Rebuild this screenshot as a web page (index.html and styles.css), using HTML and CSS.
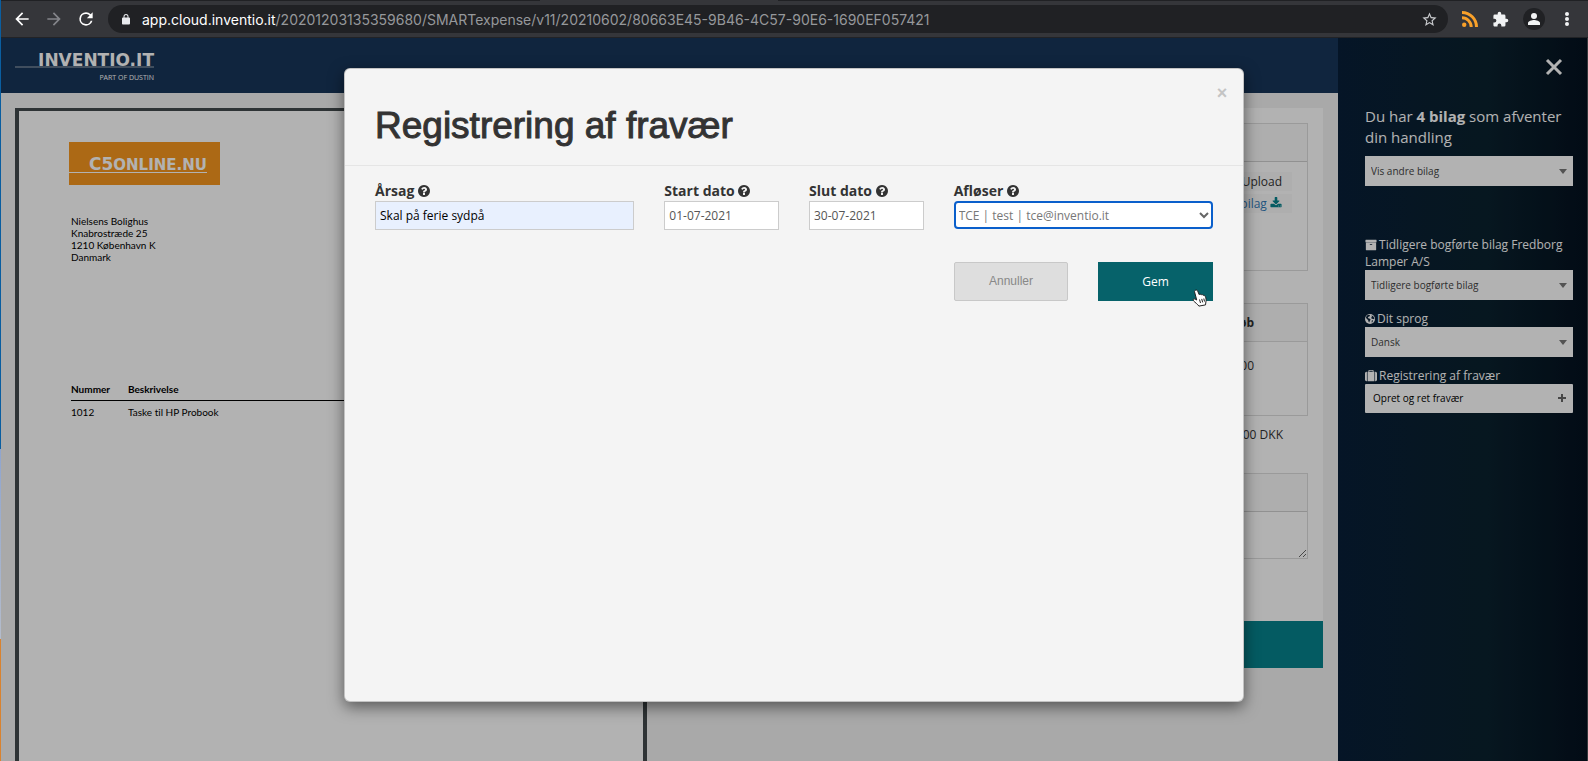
FILE: index.html
```html
<!DOCTYPE html>
<html lang="da">
<head>
  <meta charset="UTF-8">
  <meta name="viewport" content="width=device-width, initial-scale=1.0">
  <title>SMARTexpense</title>
  <link rel="stylesheet" href="styles.css">
</head>
<body>
  <svg class="sprite" aria-hidden="true">
    <symbol id="question" viewBox="0 0 1792 1792"><path d="M1024 1376v-192q0-14-9-23t-23-9h-192q-14 0-23 9t-9 23v192q0 14 9 23t23 9h192q14 0 23-9t9-23zm256-672q0-88-55.500-163t-138.500-116-170-41q-243 0-371 213-15 24 8 42l132 100q7 6 19 6 16 0 25-12 53-68 86-92 34-24 86-24 48 0 85.500 26t37.500 59q0 38-20 61t-68 45q-63 28-115.500 86.500t-52.500 125.500v36q0 14 9 23t23 9h192q14 0 23-9t9-23q0-19 21.500-49.500t54.500-49.500q32-18 49-28.500t46-35 44.500-48 28-60.500 12.500-81zm384 192q0 209-103 385.500t-279.500 279.500-385.500 103-385.500-103-279.500-279.500-103-385.500 103-385.500 279.500-279.500 385.500-103 385.500 103 279.500 279.500 103 385.500z"/></symbol>
    <symbol id="caret" viewBox="0 0 8 5"><path d="M0 0h8L4 5z"/></symbol>
  </svg>

  <div class="browser-bar">
    <div class="tab-strip"><span class="tab-active"></span></div>
    <div class="toolbar">
      <button class="nav-btn" aria-label="Tilbage"><svg viewBox="0 0 24 24"><path d="M20 11H7.800l5.600-5.600L12 4l-8 8 8 8 1.400-1.400L7.800 13H20z"/></svg></button>
      <button class="nav-btn disabled" aria-label="Frem"><svg viewBox="0 0 24 24"><path d="M12 4l-1.400 1.400L16.200 11H4v2h12.200l-5.600 5.600L12 20l8-8z"/></svg></button>
      <button class="nav-btn" aria-label="Genindlæs"><svg viewBox="0 0 24 24"><path d="M17.650 6.350A7.960 7.960 0 0 0 12 4a8 8 0 1 0 7.730 10h-2.080A6 6 0 1 1 12 6c1.660 0 3.140.69 4.220 1.780L13 11h7V4z"/></svg></button>
      <div class="address">
        <svg class="lock" viewBox="0 0 24 24"><path d="M18 8h-1V6A5 5 0 0 0 7 6v2H6a2 2 0 0 0-2 2v10c0 1.100.9 2 2 2h12a2 2 0 0 0 2-2V10a2 2 0 0 0-2-2zM9 6a3 3 0 0 1 6 0v2H9z"/></svg>
        <span class="url"><b>app.cloud.inventio.it</b>/20201203135359680/SMARTexpense/v11/20210602/80663E45-9B46-4C57-90E6-1690EF057421</span>
        <svg class="star" viewBox="0 0 24 24"><path d="M22 9.240l-7.190-.62L12 2 9.190 8.630 2 9.240l5.460 4.730L5.820 21 12 17.270 18.180 21l-1.630-7.030zM12 15.400l-3.760 2.270 1-4.280-3.320-2.880 4.380-.38L12 6.100l1.710 4.040 4.380.38-3.320 2.880 1 4.280z"/></svg>
      </div>
      <div class="extensions">
        <svg class="rss" viewBox="0 0 16 16"><circle cx="2.200" cy="13.800" r="2.200"/><path d="M0 5.300v3A7.700 7.700 0 0 1 7.700 16h3A10.700 10.700 0 0 0 0 5.300zM0 0v3a13 13 0 0 1 13 13h3A16 16 0 0 0 0 0z"/></svg>
        <svg class="puzzle" viewBox="0 0 24 24"><path d="M20.500 11H19V7a2 2 0 0 0-2-2h-4V3.500a2.500 2.500 0 0 0-5 0V5H4a2 2 0 0 0-2 2v3.800h1.500a2.700 2.700 0 0 1 0 5.400H2V20c0 1.100.9 2 2 2h3.800v-1.500a2.700 2.700 0 0 1 5.400 0V22H17a2 2 0 0 0 2-2v-4h1.500a2.500 2.500 0 0 0 0-5z"/></svg>
        <svg class="avatar" viewBox="0 0 22 22"><circle class="avatar-bg" cx="11" cy="11" r="11"/><circle cx="11" cy="8" r="3"/><path d="M5 17v-2c0-2 4-3 6-3s6 1 6 3v2z"/></svg>
        <svg class="menu" viewBox="0 0 4 14"><circle cx="2" cy="2" r="2"/><circle cx="2" cy="7" r="2"/><circle cx="2" cy="12" r="2"/></svg>
      </div>
    </div>
  </div>

  <div class="page">
    <main class="content">
      <header class="top-header">
        <div class="brand">
          <span class="brand-name">INVENTIO.IT</span>
          <span class="brand-sub">PART OF DUSTIN</span>
        </div>
      </header>

      <div class="workspace">
        <section class="document">
          <div class="doc-logo"><span class="doc-logo-text"><span class="big">C5</span>ONLINE.NU</span></div>
          <address>
            Nielsens Bolighus<br>
            Knabrostræde 25<br>
            1210 København K<br>
            Danmark
          </address>
          <table class="doc-lines">
            <thead>
              <tr><th class="col-no">Nummer</th><th>Beskrivelse</th></tr>
            </thead>
            <tbody>
              <tr><td>1012</td><td>Taske til HP Probook</td></tr>
            </tbody>
          </table>
        </section>

        <section class="details">
          <div class="card">
            <div class="panel files">
              <div class="panel-head"></div>
              <div class="panel-body">
                <a href="#" class="chip">Upload</a>
                <a href="#" class="chip link">Hent bilag <svg viewBox="0 0 1792 1792"><path d="M1344 1344q0-26-19-45t-45-19-45 19-19 45 19 45 45 19 45-19 19-45zm256 0q0-26-19-45t-45-19-45 19-19 45 19 45 45 19 45-19 19-45zm128-224v320q0 40-28 68t-68 28h-1472q-40 0-68-28t-28-68v-320q0-40 28-68t68-28h465l135 136q58 56 136 56t136-56l136-136h464q40 0 68 28t28 68zm-325-569q17 41-14 70l-448 448q-18 19-45 19t-45-19l-448-448q-31-29-14-70 17-39 59-39h256v-448q0-26 19-45t45-19h256q26 0 45 19t19 45v448h256q42 0 59 39z"/></svg></a>
              </div>
            </div>
            <table class="amounts">
              <thead><tr><th>Beløb</th></tr></thead>
              <tbody><tr><td>0,00</td></tr></tbody>
            </table>
            <p class="total">0,00 DKK</p>
            <div class="panel comment">
              <div class="panel-head"></div>
              <textarea aria-label="Kommentar"></textarea>
            </div>
          </div>
          <button class="approve-btn" aria-label="Godkend"></button>
        </section>
      </div>
    </main>

    <aside class="sidebar">
      <button class="sidebar-close" aria-label="Luk"><svg viewBox="0 0 18 18"><path d="M2 2l14 14M16 2L2 16"/></svg></button>
      <label class="lead" for="others">Du har <b>4 bilag</b> som afventer din handling</label>
      <div class="select-box">
        <select id="others"><option>Vis andre bilag</option></select>
        <svg><use href="#caret"/></svg>
      </div>
      <label class="side-label first" for="previous"><svg viewBox="0 0 1792 1792"><path d="M1088 832q0-26-19-45t-45-19h-256q-26 0-45 19t-19 45 19 45 45 19h256q26 0 45-19t19-45zm576-192v960q0 26-19 45t-45 19h-1408q-26 0-45-19t-19-45v-960q0-26 19-45t45-19h1408q26 0 45 19t19 45zm64-448v256q0 26-19 45t-45 19h-1536q-26 0-45-19t-19-45v-256q0-26 19-45t45-19h1536q26 0 45 19t19 45z"/></svg> Tidligere bogførte bilag Fredborg Lamper A/S</label>
      <div class="select-box">
        <select id="previous"><option>Tidligere bogførte bilag</option></select>
        <svg><use href="#caret"/></svg>
      </div>
      <label class="side-label" for="lang"><svg class="globe" viewBox="0 0 16 16"><circle cx="8" cy="8" r="8"/><path class="land" d="M3 2.500l3-1.500 2 1-.5 1.500-2 1L4.500 6 6 7l2 .5 1 1.500-1.500 2L7 13.500 5.500 12 5 9.500 3 8 1.500 5.500zM10.500 2l3 2 1.500 3-1 1.500-1.500-1-1.500.5-1-2 1-1.500zM11 10l2 .5-1.500 3-1-.5z"/></svg> Dit sprog</label>
      <div class="select-box">
        <select id="lang"><option>Dansk</option></select>
        <svg><use href="#caret"/></svg>
      </div>
      <label class="side-label" for="absence"><svg viewBox="0 0 1792 1792"><path d="M640 256h512v-128h-512v128zm-352 0v1408h-64q-92 0-158-66t-66-158v-960q0-92 66-158t158-66h64zm1120 0v1408h-1024v-1408h128v-160q0-40 28-68t68-28h576q40 0 68 28t28 68v160h128zm384 224v960q0 92-66 158t-158 66h-64v-1408h64q92 0 158 66t66 158z"/></svg> Registrering af fravær</label>
      <button class="absence-btn" id="absence">Opret og ret fravær <svg viewBox="0 0 8 8"><path d="M3 0h2v3h3v2H5v3H3V5H0V3h3z"/></svg></button>
    </aside>

    <div class="backdrop">
      <div class="modal" role="dialog" aria-labelledby="modalTitle">
        <div class="modal-header">
          <button class="close" aria-label="Luk">&times;</button>
          <h1 id="modalTitle">Registrering af fravær</h1>
        </div>
        <form class="modal-body">
          <div class="field wide">
            <label for="reason">Årsag <svg><use href="#question"/></svg></label>
            <input type="text" id="reason" class="filled" value="Skal på ferie sydpå">
          </div>
          <div class="field">
            <label for="start">Start dato <svg><use href="#question"/></svg></label>
            <input type="text" id="start" value="01-07-2021">
          </div>
          <div class="field">
            <label for="end">Slut dato <svg><use href="#question"/></svg></label>
            <input type="text" id="end" value="30-07-2021">
          </div>
          <div class="field wide">
            <label for="substitute">Afløser <svg><use href="#question"/></svg></label>
            <div class="substitute-box">
              <select id="substitute"><option>TCE | test | tce@inventio.it</option></select>
              <svg viewBox="0 0 10 7"><path d="M1 1l4 4 4-4"/></svg>
            </div>
          </div>
          <button type="button" class="cancel-btn">Annuller</button>
          <button type="button" class="save-btn">Gem
            <svg class="pointer" viewBox="0 0 16 18"><path d="M4.500 1.200c.9-.5 1.800 0 2.200.9l1.500 3.600c.5-.8 1.700-.7 2.100.2.600-.6 1.600-.4 2 .5.700-.4 1.500 0 1.900.9.900 2 1.200 3.700.7 5.600l-.4 3-6.600 1.200c-1.300-2-3.600-3.300-5.400-5.300-1-1.100.2-2.500 1.600-1.700l1.600.9L3.600 3c-.3-.8 0-1.400.9-1.800z"/><path class="fingers" d="M8.500 10.500l1 3.500M10.700 9.900l1 3.500M12.800 9.500l.7 3"/></svg>
          </button>
        </form>
      </div>
    </div>
  </div>
  <div class="desktop-edge"></div>
</body>
</html>
```
FILE: styles.css
```css
* {
  margin: 0;
  padding: 0;
  box-sizing: border-box;
}

body {
  display: flex;
  flex-direction: column;
  height: 100vh;
  overflow: hidden;
  font-family: 'Open Sans', 'Noto Sans', sans-serif;
  font-size: 12px;
  color: #333;
  background: #f3f3f3;
}

button, input, select, textarea {
  font-family: inherit;
  border: none;
  border-radius: 0;
}

button {
  cursor: pointer;
}

select {
  appearance: none;
}

.sprite {
  display: none;
}

/* Browser */
.browser-bar {
  height: 38px;
  background: #35363a;
  border-bottom: 1px solid #222326;
}

.tab-strip {
  height: 1px;
  background: #202124;
}

.tab-active {
  display: block;
  width: 15%;
  height: 1px;
  margin-left: 34%;
  background: #35363a;
}

.toolbar {
  display: flex;
  align-items: center;
  height: 36px;
  padding: 0 19px 0 12px;
}

.nav-btn {
  width: 20px;
  height: 20px;
  margin-right: 12px;
  background: none;
}

.nav-btn svg {
  display: block;
  width: 20px;
  height: 20px;
  fill: #fff;
}

.nav-btn.disabled svg {
  fill: #84858a;
}

.address {
  flex: 1;
  display: flex;
  align-items: center;
  height: 28px;
  padding: 0 10px 0 12px;
  border-radius: 14px;
  background: #202124;
}

.lock {
  width: 12px;
  height: 13px;
  margin-right: 10px;
  fill: #e8eaed;
}

.url {
  flex: 1;
  font-family: Inter, Roboto, sans-serif;
  font-size: 14px;
  color: #96989b;
  white-space: nowrap;
}

.url b {
  font-weight: 400;
  color: #fff;
}

.star {
  width: 17px;
  height: 17px;
  fill: #c8cacd;
}

.extensions {
  display: flex;
  align-items: center;
  gap: 14px;
  padding-left: 14px;
}

.extensions svg {
  fill: #f1f3f4;
}

.extensions .rss {
  width: 16px;
  height: 16px;
  fill: #f9a12a;
}

.puzzle {
  width: 17px;
  height: 17px;
}

.avatar {
  width: 22px;
  height: 22px;
}

.avatar .avatar-bg {
  fill: #202124;
}

.menu {
  width: 4px;
  height: 14px;
  margin-left: 6px;
}

/* Page */
.page {
  position: relative;
  flex: 1;
  display: flex;
  min-height: 0;
}

.content {
  flex: 1;
  display: flex;
  flex-direction: column;
}

.top-header {
  height: 55px;
  padding: 14px 15px;
  background: #173659;
}

.brand {
  display: flex;
  flex-direction: column;
  width: 139px;
  text-align: right;
  color: #fff;
}

.brand-name {
  height: 16px;
  font: bold 17px/16px 'DejaVu Sans', sans-serif;
  border-bottom: 2px solid #5c7087;
}

.brand-sub {
  padding-top: 4px;
  font-size: 7px;
  line-height: 12px;
}

.workspace {
  flex: 1;
  display: grid;
  grid-template-columns: 22fr 23fr;
  gap: 15px;
  padding: 15px 15px 0;
}

.document {
  padding: 31px 0 0 50px;
  border: 4px solid #43494c;
  border-width: 3px 4px 0;
  background: #fff;
  color: #000;
  font: 10px/12px Lato, sans-serif;
  font-variant-ligatures: none;
}

.doc-logo {
  width: 151px;
  height: 43px;
  padding-top: 14px;
  background: #f6971f;
  color: #fff;
}

.doc-logo-text {
  display: block;
  width: 138px;
  height: 17px;
  border-bottom: 1px solid #fff;
  font: bold 15px/16px 'DejaVu Sans', sans-serif;
  text-align: right;
}

.doc-logo-text .big {
  font-size: 17px;
}

.document address {
  padding: 30px 2px;
  font-style: normal;
}

.doc-lines {
  width: 88%;
  margin: 90px 2px 0;
  border-collapse: collapse;
}

.doc-lines th {
  padding-bottom: 5px;
  border-bottom: 1px solid #000;
  text-align: left;
}

.doc-lines td {
  padding-top: 5px;
}

.doc-lines .col-no {
  width: 57px;
}

.card {
  display: flex;
  flex-direction: column;
  height: 513px;
  padding: 15px;
  background: #fff;
}

.panel {
  border: 1px solid #ddd;
}

.panel-head {
  height: 38px;
  border-bottom: 1px solid #d0d0d0;
  background: #fafafa;
}

.files {
  height: 148px;
}

.files .panel-body {
  display: flex;
  flex-direction: column;
  align-items: flex-end;
  gap: 3px;
  padding: 10px 15px;
}

.chip {
  height: 19px;
  padding: 0 10px;
  background: #fafafa;
  color: #333;
  font-size: 12px;
  line-height: 19px;
  text-decoration: none;
}

.chip.link {
  color: #337ab7;
}

.chip svg {
  width: 12px;
  height: 12px;
  vertical-align: -1px;
  fill: #06838d;
}

.amounts {
  width: 100%;
  height: 113px;
  margin-top: 32px;
  border: 1px solid #ddd;
  border-spacing: 0;
  text-align: right;
}

.amounts th {
  height: 38px;
  padding-right: 53px;
  border-bottom: 1px solid #ddd;
  background: #fafafa;
}

.amounts td {
  padding: 15px 53px 0 0;
  vertical-align: top;
}

.total {
  padding: 10px 25px 0 0;
  text-align: right;
  line-height: 17px;
}

.comment {
  margin-top: 30px;
}

.comment textarea {
  display: block;
  width: 100%;
  height: 46px;
  resize: vertical;
}

.approve-btn {
  display: block;
  width: 100%;
  height: 47px;
  background: #06838d;
}

/* Sidebar */
.sidebar {
  display: flex;
  flex-direction: column;
  width: 250px;
  padding: 20px 14px 0 27px;
  background: linear-gradient(90deg, #081f38, #0a212e 60%, #04111f);
  border-right: 1px solid #4c5257;
  color: #fff;
}

.sidebar-close {
  align-self: flex-end;
  width: 18px;
  height: 18px;
  margin-right: 10px;
  background: none;
}

.sidebar-close svg {
  display: block;
  fill: none;
  stroke: #fff;
  stroke-width: 3;
}

.lead {
  margin-top: 30px;
  padding-bottom: 8px;
  font-size: 15px;
  line-height: 21px;
}

.side-label {
  padding-top: 10px;
  font-size: 12px;
  line-height: 17px;
}

.side-label.first {
  padding-top: 50px;
}

.side-label svg {
  width: 12px;
  height: 12px;
  margin-right: -1px;
  vertical-align: -2px;
  fill: #fff;
}

.side-label .globe {
  width: 10px;
  height: 10px;
  vertical-align: -1px;
}

.globe .land {
  fill: #0a2036;
}

.select-box {
  position: relative;
}

.select-box select {
  display: block;
  width: 100%;
  height: 30px;
  padding: 0 6px;
  background: #fff;
  color: #444;
  font-size: 10px;
}

.select-box svg {
  position: absolute;
  right: 6px;
  top: 13px;
  width: 8px;
  height: 5px;
  fill: #777;
}

.absence-btn {
  display: flex;
  align-items: center;
  justify-content: space-between;
  height: 29px;
  padding: 0 7px 2px 8px;
  border-radius: 1px;
  background: #fff;
  color: #000;
  font-size: 10px;
}

.absence-btn svg {
  width: 8px;
  height: 8px;
  fill: #666;
}

/* Modal */
.backdrop {
  position: absolute;
  inset: 0;
  padding-top: 30px;
  background: rgba(0, 0, 0, 0.3);
}

.modal {
  max-width: 900px;
  min-height: 634px;
  margin: 0 auto;
  border: 1px solid rgba(0, 0, 0, 0.2);
  border-radius: 6px;
  background: #f4f4f4;
  box-shadow: 0 5px 15px rgba(0, 0, 0, 0.5);
}

.modal-header {
  padding: 14px 14px 14px 30px;
  border-bottom: 1px solid #e5e5e5;
}

.close {
  display: block;
  width: 14px;
  height: 20px;
  margin-left: auto;
  background: none;
  color: #c4c4c4;
  font: bold 18px/20px 'Liberation Sans', sans-serif;
}

.modal-header h1 {
  padding: 3px 0 5px;
  font: 500 37px/40px 'Liberation Sans', sans-serif;
  color: #333;
  -webkit-text-stroke: 1px #333;
}

.modal-body {
  display: grid;
  grid-template-columns: repeat(6, 1fr);
  column-gap: 30px;
  row-gap: 32px;
  padding: 15px 30px;
}

.field.wide {
  grid-column: span 2;
}

.field label {
  display: block;
  font-size: 14px;
  font-weight: bold;
  line-height: 20px;
}

.field label svg {
  width: 14px;
  height: 14px;
  margin-left: -1px;
  vertical-align: -2px;
  fill: #333;
}

.field input {
  display: block;
  width: 100%;
  height: 29px;
  padding: 0 4px;
  border: 1px solid #ccc;
  background: #fff;
  color: #555;
  font-size: 12px;
}

.field input.filled {
  background: #e8f0fe;
  color: #000;
}

.substitute-box {
  position: relative;
}

.substitute-box select {
  display: block;
  width: 100%;
  height: 28px;
  padding: 0 3px;
  border: 2px solid #0a5fcb;
  border-radius: 4px;
  background: #fff;
  color: #777;
  font-size: 12px;
}

.substitute-box svg {
  position: absolute;
  right: 4px;
  top: 11px;
  width: 10px;
  height: 7px;
  fill: none;
  stroke: #666;
  stroke-width: 2;
}

.cancel-btn, .save-btn {
  height: 39px;
  font-size: 12px;
}

.cancel-btn {
  grid-column: 5;
  padding-bottom: 2px;
  border: 1px solid #c8c8c8;
  border-radius: 2px;
  background: #dedede;
  color: #888;
  font-family: 'Liberation Sans', sans-serif;
}

.save-btn {
  position: relative;
  background: #06626a;
  color: #fff;
}

.pointer {
  position: absolute;
  right: 6px;
  top: 27px;
  width: 16px;
  height: 18px;
  fill: #fff;
  stroke: #222;
}

/* Strip of the desktop left of the window */
.desktop-edge {
  position: absolute;
  inset: 0 auto 0 0;
  width: 1px;
  background: linear-gradient(#0a5ea0 59%, #8fa5cf 59%, #b4bccb 84%, #d9822e 84%);
}
```
